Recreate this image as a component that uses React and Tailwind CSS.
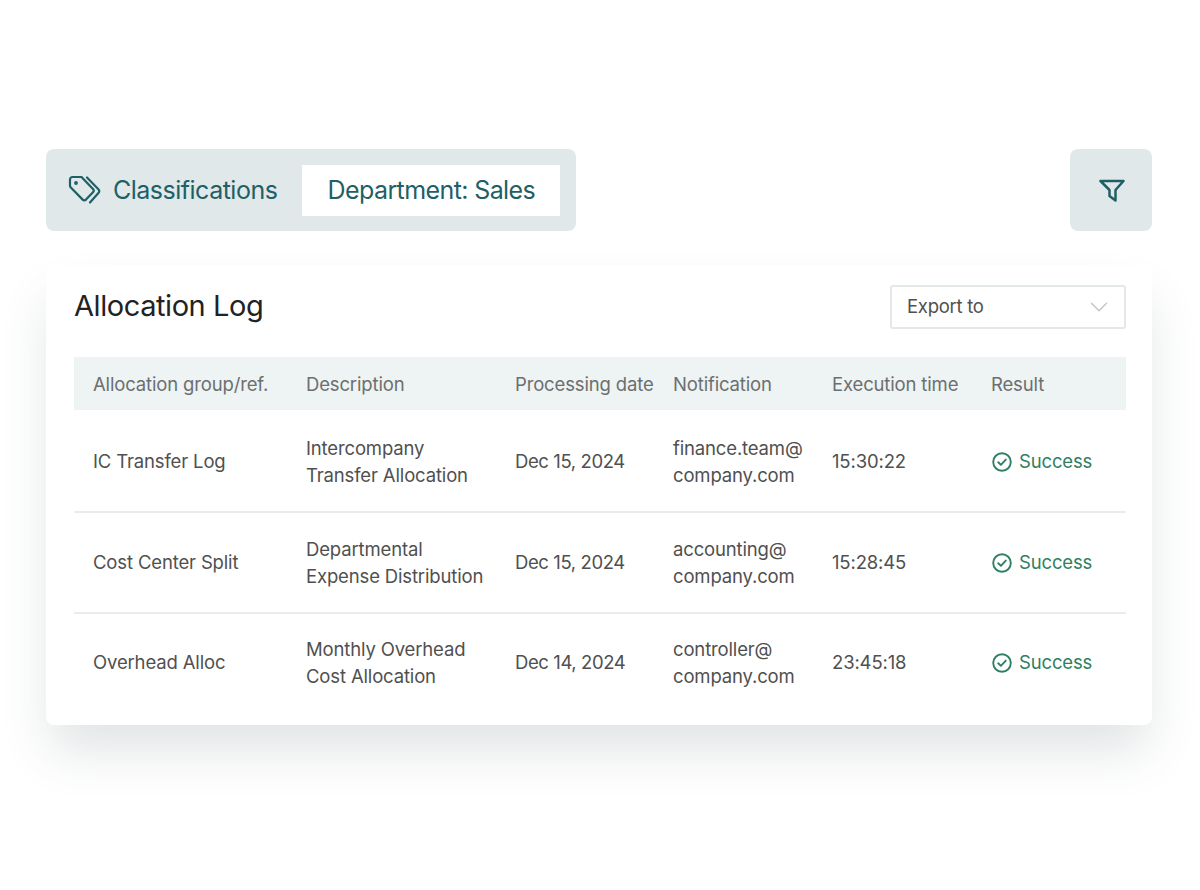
import React from 'react';
import { ChevronDown } from 'lucide-react';

const rows = [
  { group: 'IC Transfer Log', desc: ['Intercompany', 'Transfer Allocation'], date: 'Dec 15, 2024', mail: ['finance.team@', 'company.com'], time: '15:30:22', height: 'h-[103px] pt-[2px] border-b-2' },
  { group: 'Cost Center Split', desc: ['Departmental', 'Expense Distribution'], date: 'Dec 15, 2024', mail: ['accounting@', 'company.com'], time: '15:28:45', height: 'h-[101px] border-b-2' },
  { group: 'Overhead Alloc', desc: ['Monthly Overhead', 'Cost Allocation'], date: 'Dec 14, 2024', mail: ['controller@', 'company.com'], time: '23:45:18', height: 'h-[97px]' },
];

const columns = 'grid grid-cols-[213px_209px_158px_159px_159px_1fr] items-center pl-[19px]';

const TagsIcon = () => (
  <svg width="34" height="30" viewBox="0 0 34 30" fill="none" stroke="#1f5f66" strokeWidth="2.2" strokeLinejoin="round" strokeLinecap="round">
    <path d="M2 4.5C2 3 3 2 4.5 2H13.5L25 14C26 15 26 16.2 25 17.2L18 24.6C17 25.6 15.7 25.6 14.7 24.6L2.8 12.6C2.3 12.1 2 11.5 2 10.8Z" />
    <path d="M19 2.5L30.4 14.2C31.6 15.4 31.6 16.8 30.4 18L22 27.5" />
    <circle cx="8" cy="8" r="0.8" fill="#1f5f66" />
  </svg>
);

const FilterIcon = () => (
  <svg className="ml-[2px] mt-[2px]" width="26" height="24" viewBox="0 0 26 24" fill="none" stroke="#1f5f66" strokeWidth="2.5" strokeLinejoin="round">
    <path d="M1.5 2H24.5L16.5 11V21.5L10.5 17V11Z" />
  </svg>
);

const CheckIcon = () => (
  <svg width="20" height="20" viewBox="0 0 20 20" fill="none" stroke="#2f8062" strokeWidth="1.9" strokeLinecap="round" strokeLinejoin="round">
    <circle cx="10" cy="10" r="8.8" />
    <path d="M6.2 10.3L8.9 12.8L13.8 7.6" />
  </svg>
);

const Row = ({ row }) => (
  <div className={`${columns} ${row.height} border-[#e8ecec] text-[18.5px] leading-[27px] tracking-[-0.15px] text-[#505050]`}>
    <div>{row.group}</div>
    <div>{row.desc[0]}<br />{row.desc[1]}</div>
    <div className="tracking-[-0.4px]">{row.date}</div>
    <div>{row.mail[0]}<br />{row.mail[1]}</div>
    <div>{row.time}</div>
    <div className="ml-[1px] flex items-center gap-[7px] text-[#2f8062]">
      <CheckIcon />
      <span>Success</span>
    </div>
  </div>
);

export default function App() {
  return (
    <div className="w-[1200px] h-[890px] overflow-hidden bg-white pt-[149px] pl-[46px] pr-[48px] font-['Inter',sans-serif]">
      {/* Top bar */}
      <div className="flex justify-between">
        <div className="w-[530px] h-[82px] rounded-lg bg-[#e0e8ea] flex items-center pl-[22px] text-[#1f5f66] text-[25px] tracking-[-0.5px]">
          <TagsIcon />
          <span className="ml-[11px] pt-[2px]">Classifications</span>
          <div className="ml-[25px] w-[258px] h-[51px] pt-[2px] bg-white flex items-center justify-center tracking-[-0.6px]">Department: Sales</div>
        </div>
        <div className="w-[82px] h-[82px] rounded-lg bg-[#e0e8ea] flex items-center justify-center">
          <FilterIcon />
        </div>
      </div>

      {/* Log card */}
      <div className="mt-[34px] h-[460px] rounded-lg bg-white pl-[28px] pr-[26px] pt-[20px] shadow-[0_30px_50px_-5px_rgba(60,80,85,0.16)]">
        <div className="flex items-center justify-between h-[44px]">
          <h2 className="pb-[2px] text-[29px] font-normal tracking-[-0.43px] text-[#222222]">Allocation Log</h2>
          <div className="w-[236px] h-[44px] border-2 border-[#e3e8e8] rounded-[3px] flex items-center justify-between pl-[15px] pr-[10px] text-[18.5px] tracking-[-0.27px] text-[#505050]">
            <span>Export to</span>
            <ChevronDown size={30} strokeWidth={1.2} className="text-[#c3c9c9]" />
          </div>
        </div>

        <div className={`${columns} mt-[28px] h-[53px] pt-[2px] bg-[#eef3f3] text-[18.5px] tracking-[-0.15px] text-[#6b6f70]`}>
          <div>Allocation group/ref.</div>
          <div>Description</div>
          <div>Processing date</div>
          <div>Notification</div>
          <div>Execution time</div>
          <div>Result</div>
        </div>

        {rows.map((row) => (
          <Row key={row.group} row={row} />
        ))}
      </div>
    </div>
  );
}
